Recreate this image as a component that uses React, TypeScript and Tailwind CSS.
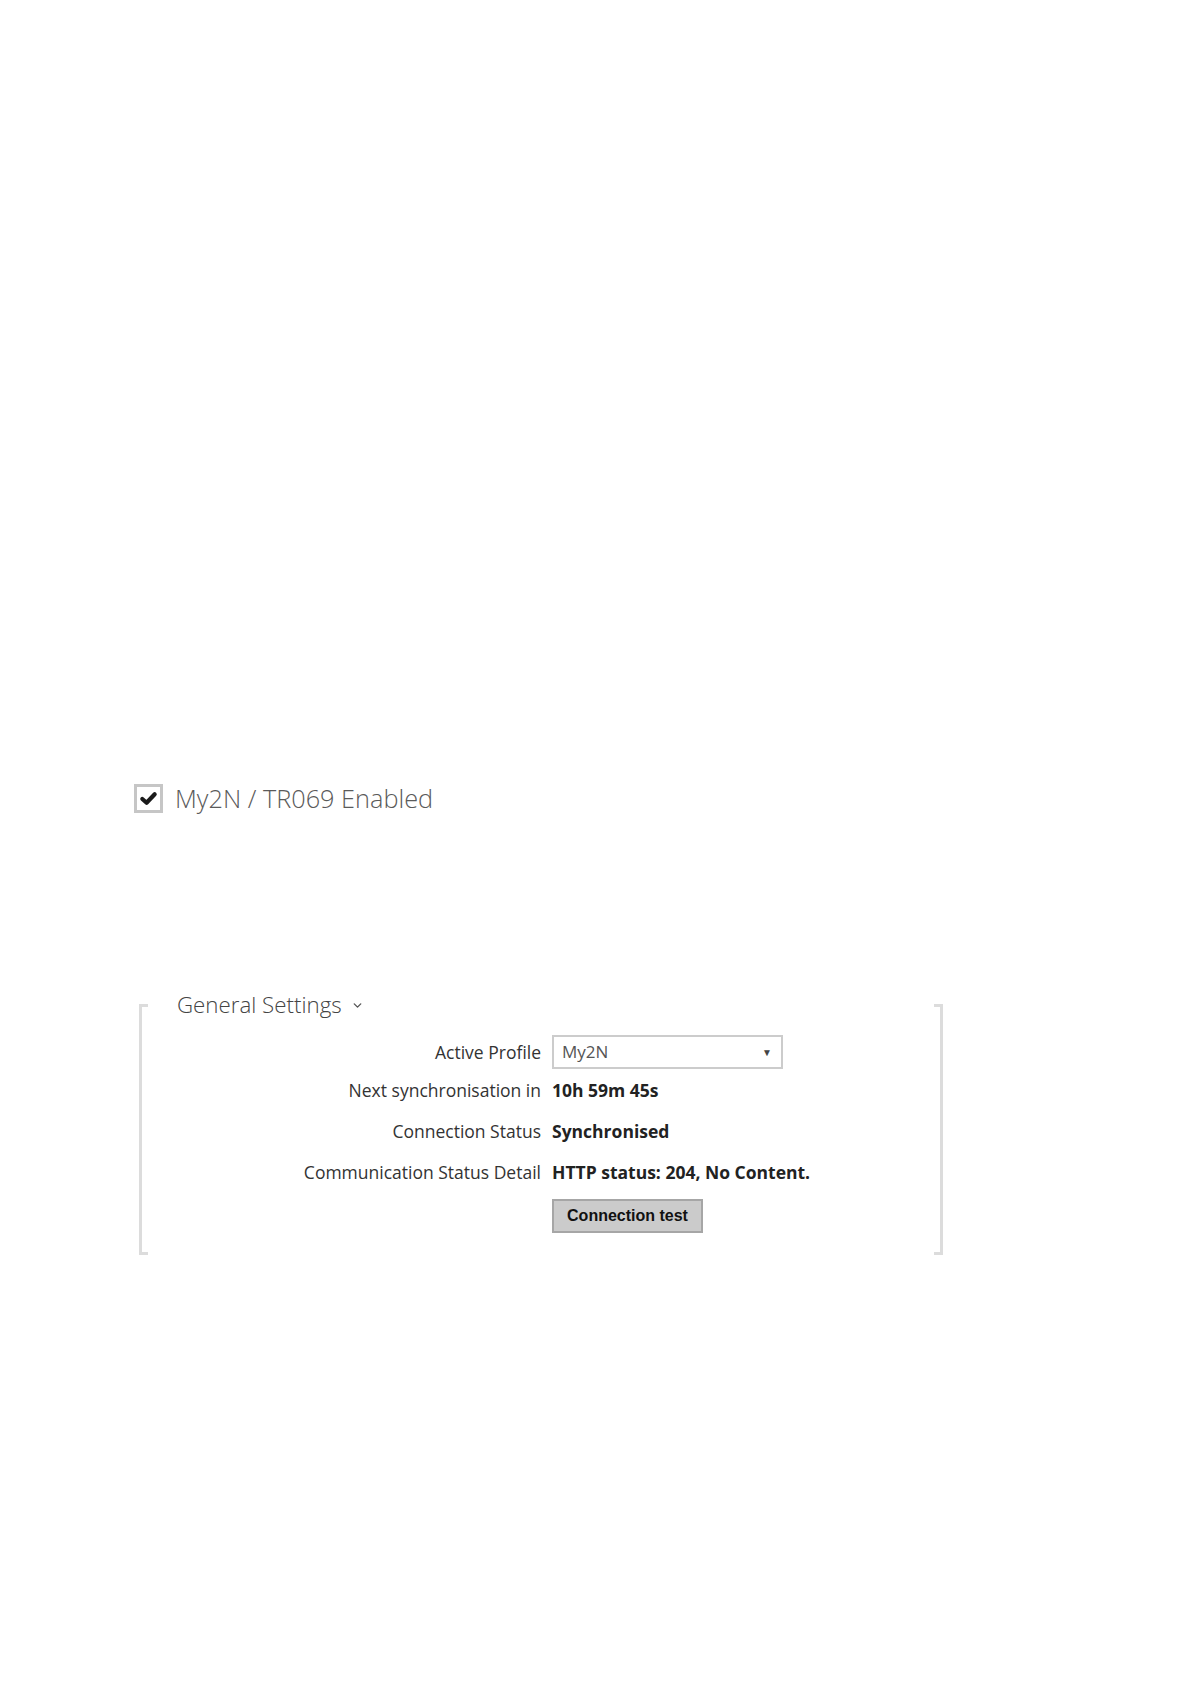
import { ChevronDown } from "lucide-react";

const rows = [
  { label: "Next synchronisation in", value: "10h 59m 45s" },
  { label: "Connection Status", value: "Synchronised" },
  { label: "Communication Status Detail", value: "HTTP status: 204, No Content." },
];

function Bracket({ side }: { side: "left" | "right" }) {
  return (
    <div
      className={
        side === "left"
          ? "mt-[13px] w-[9px] shrink-0 border-l-[3px] border-y-[3px] border-[#dcdcdc]"
          : "mt-[13px] w-[9px] shrink-0 border-r-[3px] border-y-[3px] border-[#dcdcdc]"
      }
    />
  );
}

export default function App() {
  return (
    <div className="min-h-[1684px] w-full bg-white font-['Open_Sans',sans-serif] text-[#333]">
      <div className="pt-[784px] pl-[134px]">
        <label className="flex items-center gap-[12px]">
          <span className="flex h-[29px] w-[29px] items-center justify-center border-[3px] border-[#c6c6c6] bg-white">
            <svg viewBox="0 0 20 20" className="h-[19px] w-[19px]">
              <path
                d="M3.5 10.5 L8 14.5 L16.5 5.5"
                fill="none"
                stroke="#1a1a1a"
                strokeWidth="4.4"
                strokeLinecap="round"
                strokeLinejoin="round"
              />
            </svg>
          </span>
          <span className="text-[25.3px] font-light leading-none text-[#5a5a5a]">
            My2N / TR069 Enabled
          </span>
        </label>
      </div>

      <div className="mt-[178px] ml-[139px] flex w-[804px]">
        <Bracket side="left" />
        <div className="flex-1 pb-[22px]">
          <div className="ml-[29px] flex h-[28px] items-center gap-[9px] text-[22.3px] font-light text-[#444]">
            General Settings
            <ChevronDown className="h-[13px] w-[13px] text-[#555]" strokeWidth={2.5} />
          </div>
          <div className="mt-[16px] grid grid-cols-[393px_1fr] items-center gap-x-[11px] gap-y-[2px] text-[17.5px]">
            <div className="text-right">Active Profile</div>
            <div className="flex h-[34px] w-[231px] items-center justify-between border-2 border-[#cccccc] pl-[8px] pr-[9px] text-[#555]">
              <span className="text-[17px]">My2N</span>
              <span className="text-[10px] text-[#444]">▼</span>
            </div>
            {rows.map((r) => (
              <div key={r.label} className="contents">
                <div className="flex h-[39px] items-center justify-end">{r.label}</div>
                <div className="flex h-[39px] items-center font-bold text-[#222]">{r.value}</div>
              </div>
            ))}
            <div />
            <button
              type="button"
              className="mt-[5px] h-[34px] w-[151px] border-2 border-[#a6a6a6] bg-[#cbcbcb] font-['Liberation_Sans',sans-serif] text-[16px] font-bold text-[#111]"
            >
              Connection test
            </button>
          </div>
        </div>
        <Bracket side="right" />
      </div>
    </div>
  );
}
